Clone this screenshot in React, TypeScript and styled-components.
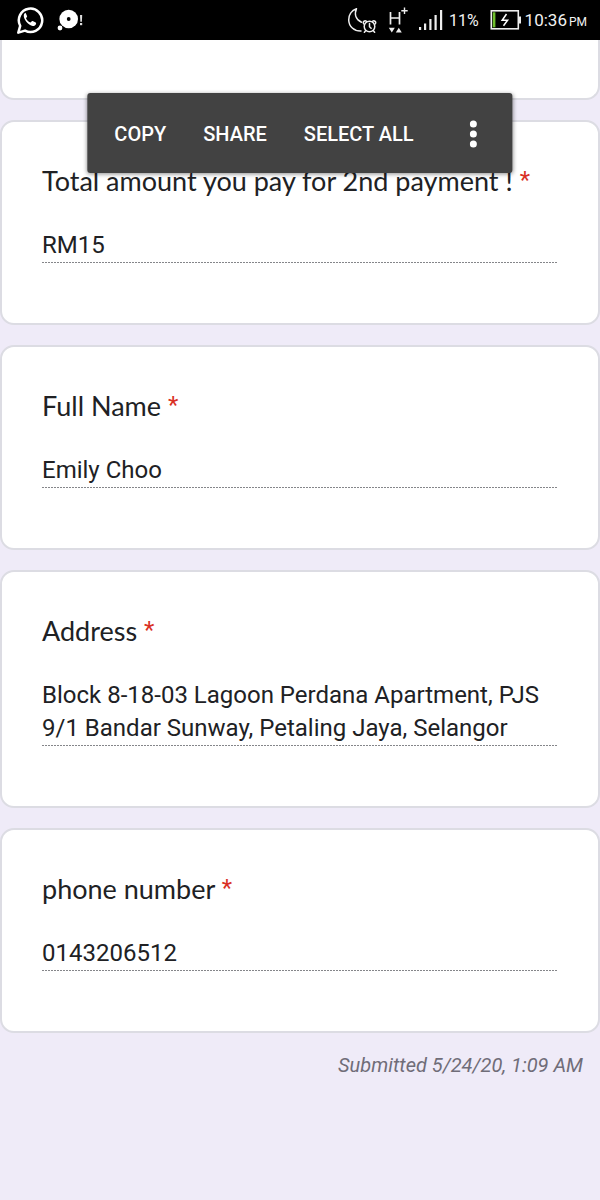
import React from "react";
import styled, { createGlobalStyle } from "styled-components";

const GlobalStyle = createGlobalStyle`
  *, *::before, *::after { box-sizing: border-box; }
  html { background: #efebf8; }
  body {
    margin: 0;
    font-family: Roboto, "Liberation Sans", sans-serif;
    color: #202124;
  }
  h2, p { margin: 0; }
`;

const StatusBar = styled.header`
  display: flex;
  align-items: center;
  justify-content: space-between;
  height: 40px;
  padding: 0 13px 0 16px;
  background: #000;
  color: #f2f2f2;
`;

const StatusGroup = styled.div<{ $gap: number }>`
  display: flex;
  align-items: center;
  gap: ${({ $gap }) => $gap}px;

  svg {
    display: block;
    flex: none;
  }
`;

const StatusText = styled.span<{ $size: number }>`
  padding-top: 2px;
  font-size: ${({ $size }) => $size}px;
  line-height: 24px;
  white-space: nowrap;

  small {
    margin-left: 2px;
    font-size: 12px;
  }
`;

const Page = styled.main`
  position: relative;
  display: flex;
  flex-direction: column;
  gap: 20px;
  padding-bottom: 40px;
`;

const Card = styled.section`
  padding: 39px 40px 60px;
  background: #fff;
  border: 2px solid #dcdce3;
  border-radius: 14px;
`;

const CardTail = styled.div`
  height: 60px;
  background: #fff;
  border: 2px solid #dcdce3;
  border-top: 0;
  border-radius: 0 0 14px 14px;
`;

const Question = styled.h2`
  font-family: Lato, Roboto, sans-serif;
  font-size: 27px;
  font-weight: 400;
  line-height: 40px;
`;

const Required = styled.span`
  color: #d93025;
  font-family: Roboto, sans-serif;
  font-size: 24px;
  line-height: 24px;
  vertical-align: 3px;
`;

const Answer = styled.p`
  margin-top: 28px;
  padding-bottom: 1px;
  font-size: 24px;
  line-height: 33px;
  background: repeating-linear-gradient(90deg, #85868a 0 2px, #fff 2px 3px) left bottom / 100% 1px no-repeat;
`;

const Submitted = styled.p`
  padding: 0 17px;
  color: #706d78;
  font-size: 20px;
  font-style: italic;
  line-height: 24px;
  text-align: right;
`;

const SelectionMenu = styled.div`
  position: absolute;
  top: 53px;
  left: 50%;
  transform: translateX(-50%);
  display: flex;
  height: 80px;
  padding: 0 8px;
  background: #424242;
  border-radius: 3px;
  box-shadow: 0 1px 4px rgba(0, 0, 0, 0.45);
`;

const MenuButton = styled.button`
  display: flex;
  align-items: center;
  padding: 2px 18px 0 19px;
  border: 0;
  background: none;
  color: #fff;
  font: 500 20px/24px Roboto, sans-serif;
  white-space: nowrap;
  cursor: pointer;
`;

const MoreButton = styled(MenuButton)`
  margin-left: 19px;
  padding-right: 27px;
`;

const WhatsAppIcon = () => (
  <svg width="28" height="40" viewBox="16 0 28 40" aria-hidden="true">
    <path
      d="M18.300 32.600l1.900-6.800A11.700 11.700 0 1 1 25 30.600z"
      fill="none"
      stroke="#fff"
      strokeWidth="2.500"
      strokeLinejoin="round"
    />
    <path
      d="M26 12.800c-.7 0-1.900.9-2.200 2.200-.6 3.500 4.400 10.600 9 11 1.500 0 3-.8 3.300-2.300 0-.5 0-1-.4-1.200l-3-1.500c-.5-.2-.8 0-1.200.4l-.9 1.200c-2-.8-3.700-2.400-4.600-4.400l1-1.400c.2-.3.2-.6 0-.9l-1.200-2.600c-.2-.4-.5-.5-.8-.5z"
      fill="#fff"
    />
  </svg>
);

const ChatHeadIcon = () => (
  <svg width="28" height="40" viewBox="56 0 28 40" aria-hidden="true">
    <circle cx="68.700" cy="19" r="9.300" fill="#fff" />
    <circle cx="68.700" cy="19" r="1.900" fill="#000" />
    <circle cx="60" cy="28" r="2.400" fill="#fff" />
    <path d="M80 15h2.200l-.3 6.800h-1.600z" fill="#ddd" />
    <rect x="80" y="23" width="2.200" height="2.200" fill="#ddd" />
  </svg>
);

const MoonAlarmIcon = () => (
  <svg
    width="30"
    height="40"
    viewBox="348 0 30 40"
    fill="none"
    stroke="#eee"
    strokeWidth="1.500"
    strokeLinecap="round"
    strokeLinejoin="round"
    aria-hidden="true"
  >
    <path d="M357.500 8.700c-5 1.700-8 6.300-7.800 11.300.2 6.500 5.300 11.200 12.300 11M357.500 8.700c-2.500 5.800-.5 11 5 13.500" />
    <circle cx="370.500" cy="26.500" r="5.300" />
    <path d="M370.500 23.500v3.300l1.600 1.500M366.800 30.600l-1.400 1.700M374.200 30.600l1.400 1.700M364.800 23.900c-1.400-1.800.8-4 2.700-2.600M376.200 23.900c1.400-1.800-.8-4-2.700-2.600" />
  </svg>
);

const NetworkIcon = () => (
  <svg width="20" height="40" viewBox="389 0 20 40" fill="none" stroke="#eee" aria-hidden="true">
    <path d="M391.500 12v12.500M400.500 12v12.500M391.500 18h9" strokeWidth="1.700" />
    <path d="M405.500 7.500v6.500M402.300 10.700h6.400" strokeWidth="1.400" />
    <path d="M389.800 27.700h6l-3 4.800zM396.800 32.500h6l-3-4.800z" fill="#eee" stroke="none" />
  </svg>
);

const SignalIcon = () => (
  <svg width="24" height="40" viewBox="419 0 24 40" fill="#eee" aria-hidden="true">
    <rect x="419" y="27" width="2.200" height="3" />
    <rect x="424" y="23.500" width="2.200" height="6.500" />
    <rect x="429.300" y="19" width="2.200" height="11" />
    <rect x="434.500" y="15" width="2.200" height="15" />
    <rect x="440" y="10" width="2.200" height="20" />
  </svg>
);

const BatteryIcon = () => (
  <svg width="31" height="40" viewBox="490 0 31 40" fill="none" aria-hidden="true">
    <rect x="491.300" y="10.800" width="27" height="18" stroke="#eee" strokeWidth="1.600" />
    <rect x="519" y="16.500" width="2" height="7" fill="#eee" />
    <rect x="492.800" y="12.300" width="2.600" height="15" fill="#6fc02c" />
    <path d="M506.500 14 502.200 20.200h5.400L503.500 25.800" stroke="#fff" strokeWidth="1.500" />
  </svg>
);

const MoreIcon = () => (
  <svg width="8" height="28" viewBox="0 0 8 28" fill="#fff" aria-hidden="true">
    <circle cx="4" cy="4" r="3.500" />
    <circle cx="4" cy="14" r="3.500" />
    <circle cx="4" cy="24" r="3.500" />
  </svg>
);

const responses = [
  { question: "Total amount you pay for 2nd payment !", answer: "RM15" },
  { question: "Full Name", answer: "Emily Choo" },
  {
    question: "Address",
    answer: "Block 8-18-03 Lagoon Perdana Apartment, PJS 9/1 Bandar Sunway, Petaling Jaya, Selangor",
  },
  { question: "phone number", answer: "0143206512" },
];

export default function App() {
  return (
    <>
      <GlobalStyle />
      <StatusBar>
        <StatusGroup $gap={12}>
          <WhatsAppIcon />
          <ChatHeadIcon />
        </StatusGroup>
        <StatusGroup $gap={11}>
          <MoonAlarmIcon />
          <NetworkIcon />
          <StatusGroup $gap={6}>
            <SignalIcon />
            <StatusText $size={16}>11%</StatusText>
          </StatusGroup>
          <StatusGroup $gap={4}>
            <BatteryIcon />
            <StatusText as="time" $size={17}>
              10:36<small>PM</small>
            </StatusText>
          </StatusGroup>
        </StatusGroup>
      </StatusBar>
      <Page>
        <CardTail />
        {responses.map(({ question, answer }) => (
          <Card key={question}>
            <Question>
              {question} <Required>*</Required>
            </Question>
            <Answer>{answer}</Answer>
          </Card>
        ))}
        <Submitted>Submitted 5/24/20, 1:09 AM</Submitted>
        <SelectionMenu role="toolbar" aria-label="Text selection">
          <MenuButton type="button">COPY</MenuButton>
          <MenuButton type="button">SHARE</MenuButton>
          <MenuButton type="button">SELECT ALL</MenuButton>
          <MoreButton type="button" aria-label="More options">
            <MoreIcon />
          </MoreButton>
        </SelectionMenu>
      </Page>
    </>
  );
}
